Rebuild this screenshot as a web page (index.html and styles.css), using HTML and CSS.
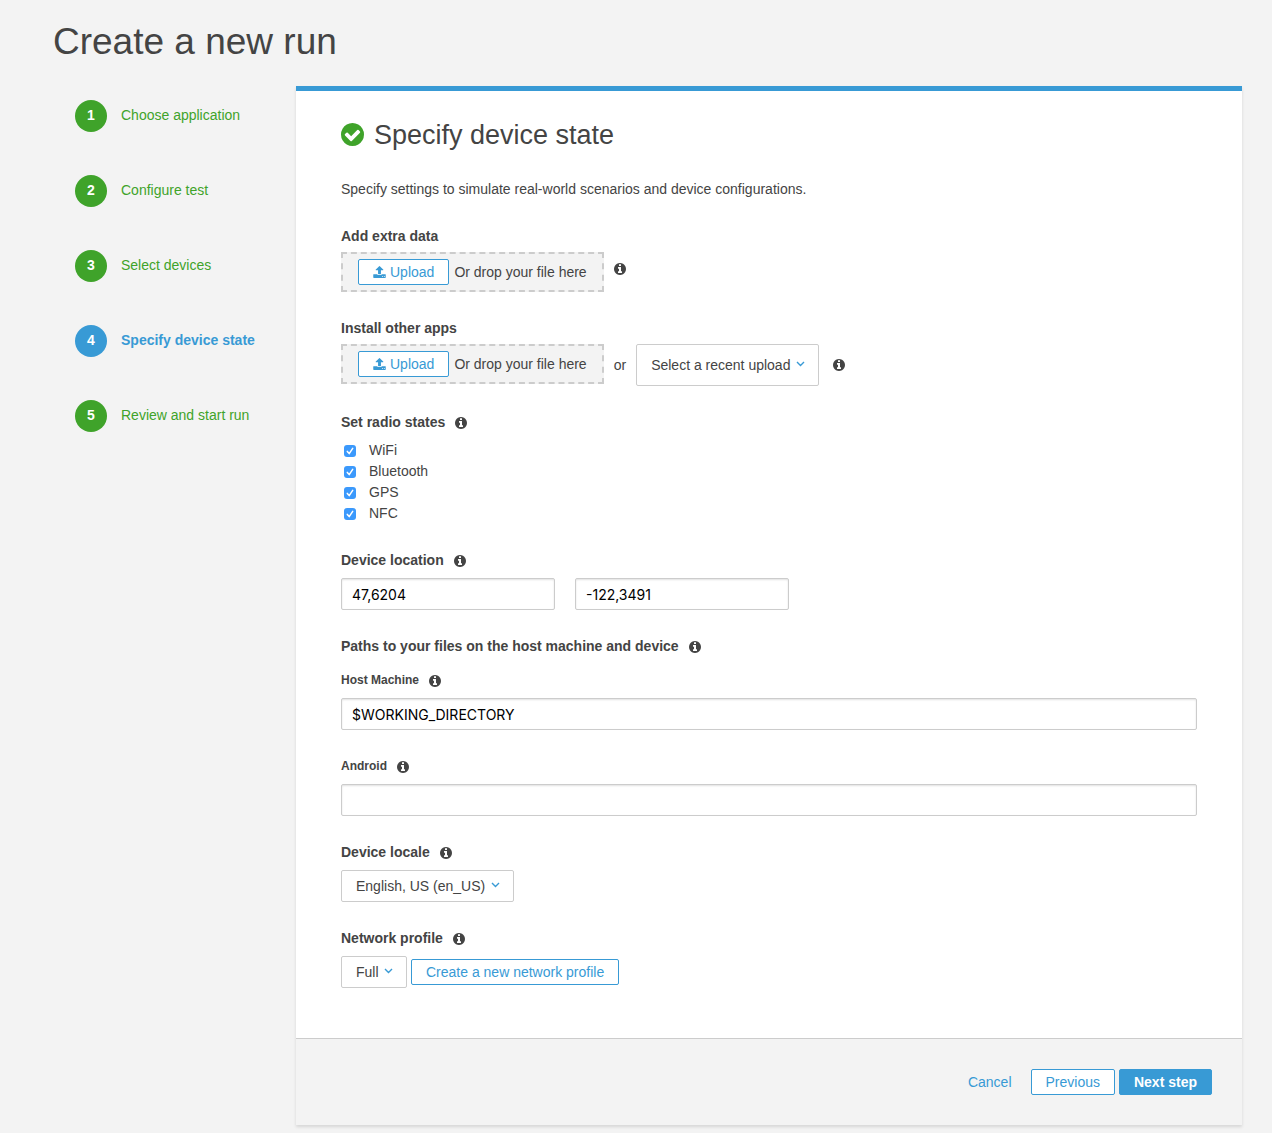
FILE: index.html
```html
<!DOCTYPE html>
<html lang="en">
<head>
<meta charset="utf-8">
<meta name="viewport" content="width=device-width, initial-scale=1">
<title>Create a new run</title>
<link rel="stylesheet" href="styles.css">
</head>
<body>
<svg class="sprite" aria-hidden="true">
  <symbol id="info" viewBox="128 128 1536 1536"><path d="M1152 1376v-160q0-14-9-23t-23-9h-96v-512q0-14-9-23t-23-9h-320q-14 0-23 9t-9 23v160q0 14 9 23t23 9h96v320h-96q-14 0-23 9t-9 23v160q0 14 9 23t23 9h448q14 0 23-9t9-23zm-128-896v-160q0-14-9-23t-23-9h-192q-14 0-23 9t-9 23v160q0 14 9 23t23 9h192q14 0 23-9t9-23zm640 416q0 209-103 385.500t-279.500 279.500-385.500 103-385.500-103-279.500-279.500-103-385.500 103-385.500 279.500-279.500 385.500-103 385.500 103 279.500 279.500 103 385.500z"/></symbol>
  <symbol id="check" viewBox="128 128 1536 1536"><path d="M1412 734q0-28-18-46l-91-90q-19-19-45-19t-45 19l-408 407-226-226q-19-19-45-19t-45 19l-91 90q-18 18-18 46 0 27 18 45l362 362q19 19 45 19 27 0 46-19l543-543q18-18 18-45zm252 162q0 209-103 385.500t-279.500 279.500-385.500 103-385.500-103-279.500-279.500-103-385.500 103-385.500 279.500-279.500 385.500-103 385.500 103 279.500 279.500 103 385.500z"/></symbol>
  <symbol id="upload" viewBox="64 64 1664 1600"><path d="M1344 1472q0-26-19-45t-45-19-45 19-19 45 19 45 45 19 45-19 19-45zm256 0q0-26-19-45t-45-19-45 19-19 45 19 45 45 19 45-19 19-45zm128-224v320q0 40-28 68t-68 28h-1472q-40 0-68-28t-28-68v-320q0-40 28-68t68-28h427q21 56 70.500 92t110.500 36h256q61 0 110.500-36t70.500-92h427q40 0 68 28t28 68zm-325-648q-17 40-59 40h-256v448q0 26-19 45t-45 19h-256q-26 0-45-19t-19-45v-448h-256q-42 0-59-40-17-39 14-69l448-448q18-19 45-19t45 19l448 448q31 30 14 69z"/></symbol>
  <symbol id="chevron" viewBox="0 0 9 6"><path d="M1 1l3.500 3.500L8 1" fill="none" stroke="currentColor" stroke-width="1.400"/></symbol>
</svg>

<h1 class="page-title">Create a new run</h1>
<div class="layout">
  <nav class="steps" aria-label="Run steps">
    <a class="step" href="#application"><span class="step-number">1</span>Choose application</a>
    <a class="step" href="#test"><span class="step-number">2</span>Configure test</a>
    <a class="step" href="#devices"><span class="step-number">3</span>Select devices</a>
    <a class="step step-current" href="#state" aria-current="step"><span class="step-number">4</span>Specify device state</a>
    <a class="step" href="#review"><span class="step-number">5</span>Review and start run</a>
  </nav>

  <form class="panel" id="state">
    <div class="panel-body">
      <h2 class="panel-title"><svg class="title-icon" aria-hidden="true"><use href="#check"/></svg>Specify device state</h2>
      <p class="intro">Specify settings to simulate real-world scenarios and device configurations.</p>

      <section class="field field-upload">
        <h3 class="label">Add extra data</h3>
        <div class="upload-row">
          <div class="dropzone"><button type="button" class="button"><svg class="upload-icon" aria-hidden="true"><use href="#upload"/></svg>Upload</button>Or drop your file here</div>
          <svg class="info info-raised" aria-hidden="true"><use href="#info"/></svg>
        </div>
      </section>

      <section class="field field-upload">
        <h3 class="label">Install other apps</h3>
        <div class="upload-row">
          <div class="dropzone"><button type="button" class="button"><svg class="upload-icon" aria-hidden="true"><use href="#upload"/></svg>Upload</button>Or drop your file here</div>
          <span>or</span>
          <div class="select-wrap select-tall">
            <select class="select" aria-label="Recent upload"><option>Select a recent upload</option></select>
            <svg class="chevron" aria-hidden="true"><use href="#chevron"/></svg>
          </div>
          <svg class="info info-after-select" aria-hidden="true"><use href="#info"/></svg>
        </div>
      </section>

      <section class="field">
        <h3 class="label">Set radio states<svg class="info" aria-hidden="true"><use href="#info"/></svg></h3>
        <div class="checks">
          <label class="check"><input type="checkbox" class="checkbox" checked>WiFi</label>
          <label class="check"><input type="checkbox" class="checkbox" checked>Bluetooth</label>
          <label class="check"><input type="checkbox" class="checkbox" checked>GPS</label>
          <label class="check"><input type="checkbox" class="checkbox" checked>NFC</label>
        </div>
      </section>

      <section class="field">
        <h3 class="label">Device location<svg class="info" aria-hidden="true"><use href="#info"/></svg></h3>
        <div class="coordinates">
          <input class="input" type="text" aria-label="Latitude" value="47,6204">
          <input class="input" type="text" aria-label="Longitude" value="-122,3491">
        </div>
      </section>

      <section class="field field-group">
        <h3 class="label">Paths to your files on the host machine and device<svg class="info" aria-hidden="true"><use href="#info"/></svg></h3>
        <div class="field">
          <label class="label label-small" for="host">Host Machine<svg class="info" aria-hidden="true"><use href="#info"/></svg></label>
          <input class="input" type="text" id="host" value="$WORKING_DIRECTORY">
        </div>
      </section>

      <div class="field">
        <label class="label label-small" for="android">Android<svg class="info" aria-hidden="true"><use href="#info"/></svg></label>
        <input class="input" type="text" id="android">
      </div>

      <div class="field">
        <label class="label" for="locale">Device locale<svg class="info" aria-hidden="true"><use href="#info"/></svg></label>
        <div class="select-wrap">
          <select class="select" id="locale"><option>English, US (en_US)</option></select>
          <svg class="chevron" aria-hidden="true"><use href="#chevron"/></svg>
        </div>
      </div>

      <div class="field">
        <label class="label" for="network">Network profile<svg class="info" aria-hidden="true"><use href="#info"/></svg></label>
        <div class="network-row">
          <div class="select-wrap">
            <select class="select" id="network"><option>Full</option></select>
            <svg class="chevron" aria-hidden="true"><use href="#chevron"/></svg>
          </div>
          <button type="button" class="button">Create a new network profile</button>
        </div>
      </div>
    </div>

    <div class="panel-footer">
      <a class="cancel" href="#cancel">Cancel</a>
      <button type="button" class="button">Previous</button>
      <button type="submit" class="button button-primary">Next step</button>
    </div>
  </form>
</div>
</body>
</html>
```
FILE: styles.css
```css
* {
  box-sizing: border-box;
}

body {
  margin: 0;
  padding: 20px 30px 7px 0;
  background: #f3f3f3;
  color: #444;
  font: 14px/20px "Helvetica Neue", "Liberation Sans", Arial, sans-serif;
}

h1, h2, h3, p {
  margin: 0;
}

.sprite {
  display: none;
}

svg {
  flex: none;
  fill: currentColor;
}

.page-title {
  padding-left: 53px;
  font-size: 37px;
  line-height: 44px;
  font-weight: 400;
}

.layout {
  display: grid;
  grid-template-columns: 296px minmax(0, 1fr);
  align-items: start;
  margin-top: 22px;
}

/* Step navigation */
.steps {
  display: grid;
  gap: 43px;
  padding: 14px 0 0 75px;
}

.step {
  display: flex;
  align-items: flex-start;
  gap: 14px;
  color: #3fa32a;
  line-height: 30px;
  text-decoration: none;
}

.step-number {
  width: 32px;
  height: 32px;
  border-radius: 50%;
  background: #3fa32a;
  color: #fff;
  font-weight: 700;
  text-align: center;
}

.step-current {
  color: #389ad5;
  font-weight: 700;
}

.step-current .step-number {
  background: #389ad5;
}

/* Panel */
.panel {
  border-top: 5px solid #389ad5;
  background: #fff;
  box-shadow: 0 2px 3px rgba(0, 0, 0, 0.12);
}

.panel-body {
  padding: 28px 45px 50px;
}

.panel-title {
  display: flex;
  align-items: center;
  gap: 10px;
  font-size: 27px;
  line-height: 32px;
  font-weight: 400;
}

.title-icon {
  width: 23px;
  height: 23px;
  margin-bottom: 2px;
  color: #3fa32a;
}

.intro {
  margin-top: 28px;
  line-height: 21px;
}

.panel-body > .field {
  margin-top: 26px;
}

.field {
  display: grid;
  gap: 8px;
}

.field-upload {
  gap: 6px;
}

.field-group {
  gap: 14px;
}

.label {
  display: flex;
  align-items: center;
  gap: 10px;
  font-size: 14px;
  font-weight: 700;
}

.label-small {
  font-size: 12px;
}

.info {
  width: 12px;
  height: 12px;
}

.label .info {
  margin-top: 2px;
}

.upload-row {
  display: flex;
  align-items: center;
  gap: 10px;
}

.info-raised {
  margin-bottom: 6px;
}

.info-after-select {
  margin-left: 4px;
}

.dropzone {
  display: flex;
  align-self: flex-start;
  align-items: center;
  gap: 5px;
  height: 40px;
  padding: 0 15px;
  border: 2px dashed #ccc;
  background: #f3f3f3;
}

.button {
  display: flex;
  align-items: center;
  gap: 4px;
  height: 26px;
  padding: 0 14px;
  border: 1px solid #389ad5;
  border-radius: 2px;
  background: #fff;
  color: #389ad5;
  font: inherit;
  line-height: 24px;
}

.button-primary {
  background: #389ad5;
  color: #fff;
  font-weight: 700;
}

.upload-icon {
  width: 13px;
  height: 12px;
}

.select-wrap {
  position: relative;
  justify-self: start;
}

.select {
  appearance: none;
  display: block;
  height: 32px;
  padding: 0 27px 0 14px;
  border: 1px solid #ccc;
  border-radius: 2px;
  background: #fff;
  color: #444;
  font: inherit;
}

.select-tall .select {
  height: 42px;
}

.chevron {
  position: absolute;
  top: calc(50% - 4px);
  right: 14px;
  width: 9px;
  height: 6px;
  color: #389ad5;
  pointer-events: none;
}

.check {
  display: flex;
  align-items: center;
  gap: 13px;
  padding-left: 3px;
  line-height: 21px;
}

.checkbox {
  appearance: none;
  width: 12px;
  height: 12px;
  margin: 1px 0 0;
  border: 1px solid #bbb;
  border-radius: 3px;
  background: #fff;
}

.checkbox:checked {
  border: 0;
  background: #3b99fc url("data:image/svg+xml,%3Csvg xmlns='http://www.w3.org/2000/svg' viewBox='0 0 12 12'%3E%3Cpath d='M3.300 6.400l1.900 2.200 3.500-5.300' fill='none' stroke='white' stroke-width='1.500' stroke-linecap='round' stroke-linejoin='round'/%3E%3C/svg%3E") center / 12px 12px no-repeat;
}

.coordinates {
  display: grid;
  grid-template-columns: repeat(auto-fit, 214px);
  gap: 20px;
}

.input {
  width: 100%;
  height: 32px;
  padding: 0 10px;
  border: 1px solid #ccc;
  border-radius: 2px;
  background: #fff;
  box-shadow: inset 0 1px 2px rgba(0, 0, 0, 0.12);
  color: #000;
  font: 14px/20px Inter, sans-serif;
}

.network-row {
  display: flex;
  align-items: center;
  gap: 4px;
}

.panel-footer {
  display: flex;
  flex-wrap: wrap;
  align-items: center;
  justify-content: flex-end;
  gap: 4px;
  padding: 30px;
  border-top: 1px solid #ccc;
  background: #f3f3f3;
}

.cancel {
  margin-right: 15px;
  color: #389ad5;
  text-decoration: none;
}
```
